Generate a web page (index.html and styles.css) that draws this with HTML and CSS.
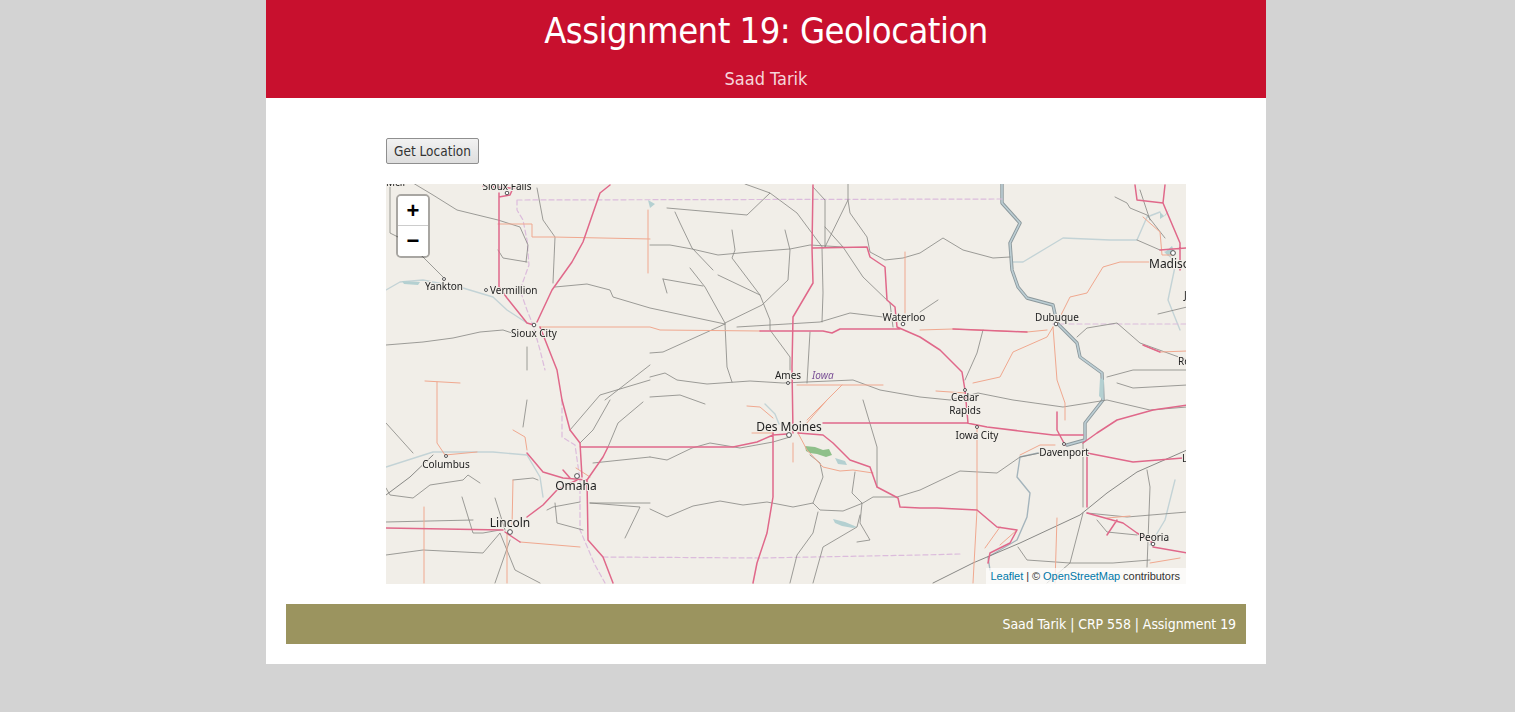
FILE: index.html
```html
<!DOCTYPE html>
<html lang="en">
<head>
<meta charset="utf-8">
<title>Assignment 19: Geolocation</title>
<link rel="stylesheet" href="styles.css">
</head>
<body>
<div class="page">
  <header class="banner">
    <h1 class="banner-title">Assignment 19: Geolocation</h1>
    <p class="banner-sub">Saad Tarik</p>
  </header>
  <main class="content">
    <button class="locate-btn" type="button">Get Location</button>
    <div class="map">
      <svg class="map-art" viewBox="386 184 800 400" width="800" height="400" xmlns="http://www.w3.org/2000/svg">
        <rect class="land" x="386" y="184" width="800" height="400"/>
        <g class="water-soft">
          <path d="M386 467L433 452L493 452L527 455L540 477L543 497M1013 262L1023 262L1043 250L1063 238L1110 240L1137 240L1147 217L1160 212M765 404L775 414L779 424M386 290L400 282L423 280L463 288L493 297L507 310L527 323M1165 252L1176 262L1168 300L1180 330M1175 480L1165 520L1150 545"/>
        </g>
        <g class="river-main">
          <path class="river-edge" d="M1002 184L1002 203L1020 223L1010 243L1012 270L1018 287L1027 298L1053 305L1057 323L1077 343L1080 357L1102 373L1103 400L1085 423L1085 440L1067 445"/>
          <path class="river-core" d="M1002 184L1002 203L1020 223L1010 243L1012 270L1018 287L1027 298L1053 305L1057 323L1077 343L1080 357L1102 373L1103 400L1085 423L1085 440L1067 445"/>
          <path class="river-thin" d="M1038 453L1020 457L1017 477L1030 493L1027 517L1017 540L988 557L990 570"/>
        </g>
        <g class="lake">
          <path d="M833 519L845 522L857 527L853 528L842 526L835 523ZM835 458L845 461L847 465L838 464ZM1160 212L1164 216L1170 209L1166 215L1160 219ZM1165 252L1172 246L1174 251L1168 256ZM648 200L655 204L650 208ZM402 281L420 282L418 285L404 284ZM1100 378L1104 380L1103 400L1099 396Z"/>
        </g>
        <path class="park" d="M805 446L815 447L823 450L829 449L832 455L826 457L817 454L810 453L806 451Z"/>
        <g class="border">
          <path d="M517 200L1003 199M517 200L517 210L523 220L527 240L529 265L520 290L527 310L533 325L540 350L545 370M1053 324L1187 324M603 557L760 558L920 555L960 554M562 400L562 437L575 445L580 480L580 530L595 565L605 583"/>
        </g>
        <g class="minor">
          <path d="M413 183L433 195L457 210L498 220L520 227L528 245L526 262M390 187L390 233L400 238L423 257L443 277M498 250L503 258L527 262M537 188L543 220L555 237L553 283M555 287L587 284L610 290L613 297L650 308L725 324M386 345L423 342L453 338L480 332L503 330L512 333M527 347L527 370M650 245L670 245L692 249L718 255L750 252L790 249L810 245L843 247M675 212L680 223L692 248L713 270M690 268L705 287L725 323M650 353L663 352L725 324M667 208L747 215L770 193L745 184M770 193L797 213L823 248M732 230L735 250L732 258L760 295L770 320L770 330L790 357L790 370M785 230L790 250L788 280L762 305L725 323M718 275L760 295M663 279L703 286M663 279L667 293M725 324L727 367L732 382M737 327L820 322L850 313L883 317M822 322L823 293L822 248M825 227L843 247L863 277L890 303L893 327M813 187L825 200L825 247M848 184L848 200L825 247M848 200L850 213L867 237L870 252L885 260L903 258L920 253L943 238L963 250L993 258L1010 257M810 332L807 383M650 377L665 373L677 380L707 384L750 381L783 383L853 380L880 390L920 397L950 400L978 393L1013 400L1063 407L1107 400L1150 410L1187 407M650 397L680 395L705 404M650 457L667 460L692 448L710 443L740 448L773 442L790 437M650 509L667 517L693 506L720 501L743 505L767 502L793 507L813 503L820 510L843 511L863 503L873 497L897 497L920 490L960 471L997 473L1020 457L1040 453M863 400L877 447L877 487M855 472L852 493L862 503L860 523L870 540L857 542M813 503L823 477L820 463L810 455M818 512L813 533L797 555L790 583M860 515L857 527L823 547L813 583M1083 513L1070 563L1047 583M1083 443L1083 507M1147 470L1150 487L1147 567M1087 513L1127 517L1187 512M1097 520L1107 532L1137 535M1018 547L1027 560L1070 563L1113 563L1150 560M1077 337L1087 328L1117 323L1140 343L1187 360M1117 383L1133 388L1187 385M1107 377L1133 370L1187 370M1115 197L1127 203L1130 208L1147 215L1165 238M1137 240L1160 250M1158 314L1187 307M1140 190L1150 220M938 300L920 312M580 443L593 430L610 400M608 447L618 423L643 402M593 463L650 457M570 430L600 395L650 380M605 400L650 365M386 488L390 495L413 498L430 485L463 480L468 475L480 483M462 497L473 533L483 533L500 530M386 522L473 520M386 555L423 550L483 553L500 533L515 570L540 583M495 498L505 530M513 480L533 478L538 480M547 510L553 507L580 502M555 503L557 523L583 530M590 503L640 507L625 538M650 503L590 503M523 427L527 400M386 423L413 453M983 330L977 353L965 380M510 540L495 583"/>
        </g>
        <path class="trunkline" d="M973 563L1020 543L1080 515L1107 493L1137 472L1187 450M973 563L933 583M386 495L410 477L433 455"/>
        <g class="primary">
          <path d="M498 224L532 224L532 237L553 237L650 239M648 210L648 273M540 327L650 327L660 330L760 331M920 330L953 329L1027 332L1047 330M1053 327L1047 337L1013 352L1000 377L973 383M1053 327L1057 380L1065 403L1065 420M1057 323L1070 297L1087 293L1103 267L1120 262L1150 262M905 252L905 313M747 406L760 407L773 418M842 385L807 420M797 385L883 385M752 433L773 433M793 443L793 462M827 400L798 433M437 382L437 443L445 455M425 381L460 383M513 480L512 527M424 507L424 583M507 533L507 583M520 542L580 547M977 425L977 510L973 583M1057 518L1055 583M1143 345L1160 352L1187 351M1143 217L1160 232L1162 255L1173 255M798 433L807 450L823 467L840 471L853 470L873 473M1020 455L1040 445L1055 445M936 391L965 393M576 468L590 477M1000 527L985 548M1017 530L1000 545M1150 563L1180 558M1107 518L1130 516M513 430L525 437L527 450M445 455L477 452"/>
        </g>
        <g class="motorway">
          <path d="M499 193L499 287L507 298L527 323L534 325M540 327L557 370L562 400L570 430L580 443L582 477M587 480L588 540L603 557L613 583M537 322L552 290L572 262L583 242L593 213L600 193L610 185M483 186L510 188L530 186M499 197L510 195L513 188M580 447L650 447L693 447L733 447L757 442L773 435L787 434M798 433L823 435L833 443L850 460L870 467L877 487L898 498L900 507L920 508L937 508L977 510L997 527L1017 530L1010 543L990 553L988 563M823 423L920 423L967 423L987 427L1053 435L1083 435M1083 443L1097 433L1117 420L1153 410L1187 405M1087 453L1133 462L1183 458M813 185L812 248L813 283L793 317L792 367L793 433M773 433L773 497L767 533L757 563L753 583M760 331L823 331L832 333L840 329L900 329M813 248L867 247L870 257L885 267L887 300L895 307L897 327L920 337L940 350L962 372L965 390L968 423M953 329L1027 332M1087 453L1087 507M1057 412L1057 430L1065 445M1087 513L1123 523L1137 533L1153 543M1153 547L1187 553M1135 185L1137 200L1163 203L1165 185M1163 203L1180 243L1180 270M1160 250L1187 248M386 528L503 530M527 517L543 505L557 490L577 480M527 453L543 472L563 478L587 480M608 447L603 457L587 480M505 532L520 542M563 470L570 478M1143 345L1160 352M1107 535L1117 520"/>
        </g>
        <g class="cities">
          <circle cx="507" cy="193" r="1.8"/><circle cx="444" cy="279" r="1.5"/><circle cx="486" cy="290" r="1.5"/><circle cx="534" cy="325" r="1.8"/><circle cx="903" cy="324" r="1.8"/><circle cx="1056" cy="324" r="1.8"/><circle cx="788" cy="383" r="1.5"/><circle cx="965" cy="390" r="1.5"/><circle cx="977" cy="427" r="1.5"/><circle cx="1064" cy="444" r="1.5"/><circle cx="789" cy="435" r="2.4"/><circle cx="577" cy="476" r="2.4"/><circle cx="510" cy="532" r="2.4"/><circle cx="446" cy="456" r="1.5"/><circle cx="1153" cy="544" r="1.8"/><circle cx="1173" cy="253" r="2.4"/>
        </g>
        <g class="labels">
          <text x="507" y="190" text-anchor="middle">Sioux Falls</text>
          <text x="444" y="290" text-anchor="middle">Yankton</text>
          <text x="490" y="294">Vermillion</text>
          <text x="534" y="337" text-anchor="middle">Sioux City</text>
          <text x="904" y="321" text-anchor="middle">Waterloo</text>
          <text x="1057" y="321" text-anchor="middle">Dubuque</text>
          <text x="788" y="379" text-anchor="middle">Ames</text>
          <text class="label-region" x="812" y="379">Iowa</text>
          <text x="965" y="401" text-anchor="middle">Cedar</text>
          <text x="965" y="414" text-anchor="middle">Rapids</text>
          <text x="977" y="439" text-anchor="middle">Iowa City</text>
          <text x="1064" y="456" text-anchor="middle">Davenport</text>
          <text class="label-big" x="789" y="431" text-anchor="middle">Des Moines</text>
          <text class="label-big" x="576" y="490" text-anchor="middle">Omaha</text>
          <text class="label-big" x="510" y="527" text-anchor="middle">Lincoln</text>
          <text x="446" y="468" text-anchor="middle">Columbus</text>
          <text x="1154" y="541" text-anchor="middle">Peoria</text>
          <text class="label-big" x="1149" y="268">Madison</text>
          <text x="1184" y="299">J</text>
          <text x="1178" y="365">Ro</text>
          <text x="1182" y="462">L</text>
          <text x="386" y="186">Mcll</text>
        </g>
      </svg>
      <div class="zoom-box">
        <button class="zoom-btn zoom-in" type="button">+</button>
        <button class="zoom-btn" type="button">−</button>
      </div>
      <div class="attribution"><a href="#">Leaflet</a> | © <a href="#">OpenStreetMap</a> contributors</div>
    </div>
  </main>
  <footer class="foot">Saad Tarik | CRP 558 | Assignment 19</footer>
</div>
</body>
</html>
```

FILE: styles.css
```css
html, body {
  margin: 0;
  padding: 0;
}

body {
  background: #d3d3d3;
  font-family: "DejaVu Sans", Tahoma, sans-serif;
  font-stretch: condensed;
  color: #333;
}

.page {
  width: 1000px;
  margin: 0 0 0 266px;
  background: #fff;
  padding-bottom: 20px;
}

.banner {
  background: #c8102e;
  height: 98px;
  text-align: center;
  overflow: hidden;
}

.banner-title {
  margin: 0;
  padding-top: 8px;
  font-size: 36px;
  line-height: 46px;
  font-weight: 400;
  letter-spacing: -0.5px;
  color: #fff;
}

.banner-sub {
  margin: 13px 0 0;
  font-size: 18px;
  line-height: 24px;
  color: #f6d5da;
}

.content {
  padding: 40px 0 20px 120px;
}

.locate-btn {
  display: block;
  width: 93px;
  height: 26px;
  padding: 0;
  font-family: inherit;
  font-stretch: condensed;
  font-size: 13.5px;
  color: #333;
  background: linear-gradient(#f2f2f2, #dedede);
  border: 1px solid #8f8f8f;
  border-radius: 2px;
}

.map {
  position: relative;
  width: 800px;
  height: 400px;
  margin-top: 20px;
  overflow: hidden;
}

.map-art {
  display: block;
  filter: blur(0.3px);
}

.land { fill: #f1eee8; }

.water-soft path,
.river-main path,
.minor path,
.trunkline,
.primary path,
.motorway path,
.border path {
  fill: none;
  stroke-linejoin: round;
  stroke-linecap: round;
}

.water-soft path { stroke: #c3d3d6; stroke-width: 1.4; }
.river-main .river-edge { stroke: #8c989c; stroke-width: 3.4; }
.river-main .river-core { stroke: #bcced4; stroke-width: 1.6; }
.river-main .river-thin { stroke: #a4b4bc; stroke-width: 1.4; }
.lake path { fill: #b4d0d1; }
.park { fill: #8fc08a; }
.border path { stroke: #dcbcdc; stroke-width: 1.2; stroke-dasharray: 5 3; }
.minor path { stroke: #858581; stroke-width: 0.8; }
.trunkline { stroke: #7d7d7a; stroke-width: 0.9; }
.primary path { stroke: #f0a88f; stroke-width: 1; }
.motorway path { stroke: #e0688a; stroke-width: 1.5; }
.cities circle { fill: #fff; stroke: #444; stroke-width: 0.9; }

.labels text {
  font-family: "Noto Sans", sans-serif;
  font-stretch: normal;
  font-size: 10px;
  fill: #222;
  stroke: #f1eee8;
  stroke-width: 2px;
  paint-order: stroke;
}

.labels .label-big { font-size: 12px; }
.labels .label-region { font-style: italic; fill: #7a4f96; }

.zoom-box {
  position: absolute;
  top: 10px;
  left: 10px;
  display: flex;
  flex-direction: column;
  border: 2px solid rgba(0, 0, 0, 0.3);
  border-radius: 5px;
  overflow: hidden;
  background-clip: padding-box;
}

.zoom-btn {
  display: block;
  width: 30px;
  height: 30px;
  padding: 0;
  border: 0;
  background: #fff;
  color: #000;
  font-family: "Liberation Sans", Arial, sans-serif;
  font-size: 22px;
  font-weight: 700;
  line-height: 30px;
  text-align: center;
}

.zoom-in { border-bottom: 1px solid #ccc; }

.attribution {
  position: absolute;
  right: 0;
  bottom: 0;
  padding: 0 6px 0 5px;
  height: 16px;
  line-height: 16px;
  font-family: "Liberation Sans", Arial, sans-serif;
  font-stretch: normal;
  font-size: 11px;
  letter-spacing: -0.05px;
  color: #333;
  background: rgba(255, 255, 255, 0.7);
}

.attribution a {
  color: #0078a8;
  text-decoration: none;
}

.foot {
  margin: 0 20px;
  height: 40px;
  padding-right: 10px;
  background: #9b945f;
  color: #fff;
  font-size: 14px;
  letter-spacing: -0.08px;
  line-height: 40px;
  text-align: right;
}
```
